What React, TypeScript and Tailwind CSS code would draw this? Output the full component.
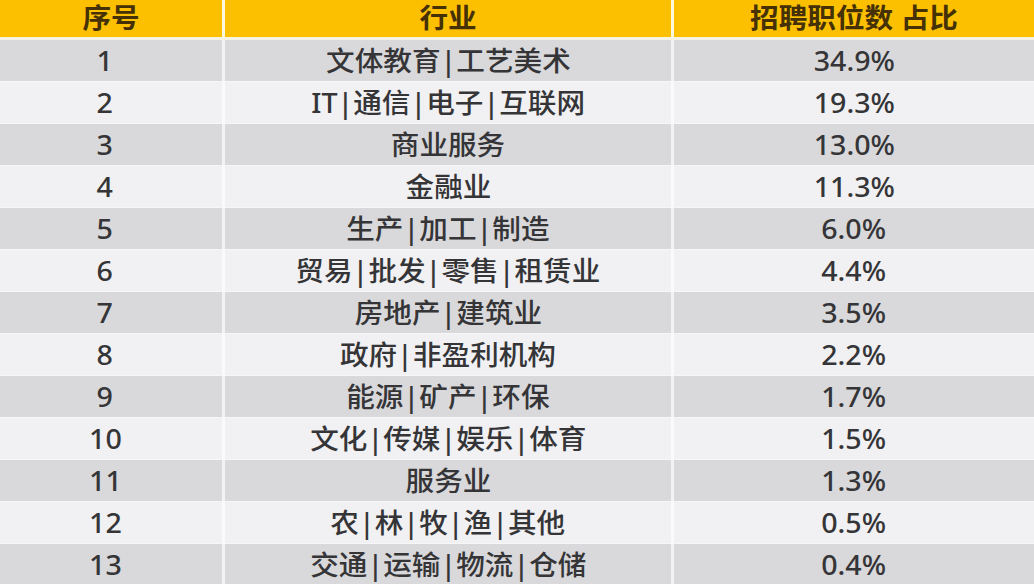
import React from "react";

const rows: [string, string, string][] = [
  ["1", "文体教育|工艺美术", "34.9%"],
  ["2", "IT|通信|电子|互联网", "19.3%"],
  ["3", "商业服务", "13.0%"],
  ["4", "金融业", "11.3%"],
  ["5", "生产|加工|制造", "6.0%"],
  ["6", "贸易|批发|零售|租赁业", "4.4%"],
  ["7", "房地产|建筑业", "3.5%"],
  ["8", "政府|非盈利机构", "2.2%"],
  ["9", "能源|矿产|环保", "1.7%"],
  ["10", "文化|传媒|娱乐|体育", "1.5%"],
  ["11", "服务业", "1.3%"],
  ["12", "农|林|牧|渔|其他", "0.5%"],
  ["13", "交通|运输|物流|仓储", "0.4%"],
];

const App = () => {
  return (
    <div
      className="w-[1034px] h-[584px] overflow-hidden bg-[#f8f8fa]"
      style={{ fontFamily: '"Noto Sans", "Noto Sans CJK SC", sans-serif' }}
    >
      {/* header */}
      <div className="grid grid-cols-[222px_446px_1fr] gap-x-[3px] h-[40px] bg-[#fdf8dc] border-b-[3px] border-[#f6f3e4]">
        {["序号", "行业", "招聘职位数 占比"].map((h) => (
          <div
            key={h}
            className="bg-[#fcc000] flex items-center justify-center text-[27px] font-semibold text-[#453105] leading-none pb-[2px]"
          >
            <span className="scale-x-[1.06]">{h}</span>
          </div>
        ))}
      </div>

      {/* body */}
      <div className="flex flex-col">
        {rows.map(([n, name, pct], i) => (
          <div
            key={n}
            className={`grid grid-cols-[222px_446px_1fr] gap-x-[3px] h-[42px] border-b-[1.5px] border-[#f7f7f9] ${
              i % 2 === 0 ? "bg-[#f3f3f5]" : "bg-[#fafafc]"
            }`}
          >
            {[n, name, pct].map((c, j) => (
              <div
                key={j}
                className={`flex items-center justify-center text-[27px] font-medium text-[#353538] leading-none ${
                  j === 0 ? "pr-[12px]" : ""
                } ${i % 2 === 0 ? "bg-[#d9d9db]" : "bg-[#f1f1f3]"}`}
              >
                <span className="scale-x-[1.06]">{c}</span>
              </div>
            ))}
          </div>
        ))}
      </div>
    </div>
  );
};

export default App;
